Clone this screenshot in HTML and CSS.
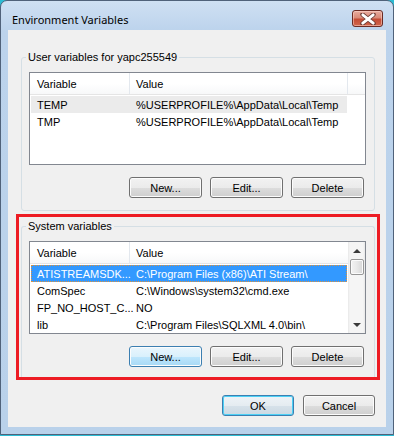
FILE: index.html
```html
<!DOCTYPE html>
<html lang="en">
<head>
    <meta charset="UTF-8">
    <meta name="viewport" content="width=device-width, initial-scale=1.0">
    <link rel="stylesheet" href="styles.css">
    <title>Environment Variables</title>
</head>
<body>
    <div class="window">
        <div class="titlebar">
            <span class="title">Environment Variables</span>
            <button class="close" aria-label="Close">
                <svg width="16" height="12" viewBox="0 0 16 12">
                    <path d="M2.5 1.5 L13.5 10.5 M13.5 1.5 L2.5 10.5" stroke="#6b3a33" stroke-width="4.4" stroke-linecap="round"/>
                    <path d="M2.8 1.8 L13.2 10.2 M13.2 1.8 L2.8 10.2" stroke="#ffffff" stroke-width="2.8" stroke-linecap="round"/>
                </svg>
            </button>
        </div>

        <div class="client">
            <!-- user variables -->
            <fieldset class="group first">
                <legend>User variables for yapc255549</legend>
                <div class="list">
                    <div class="main">
                        <div class="header">
                            <span class="hcol1">Variable</span>
                            <span class="hcol2 divided">Value</span>
                            <span class="hcol3"></span>
                        </div>
                        <div class="row light">
                            <span class="cell1">TEMP</span>
                            <span class="cell2">%USERPROFILE%\AppData\Local\Temp</span>
                        </div>
                        <div class="row">
                            <span class="cell1">TMP</span>
                            <span class="cell2">%USERPROFILE%\AppData\Local\Temp</span>
                        </div>
                    </div>
                </div>
                <div class="buttons">
                    <button>New...</button>
                    <button>Edit...</button>
                    <button>Delete</button>
                </div>
            </fieldset>

            <!-- system variables, marked in red -->
            <div class="highlight">
                <fieldset class="group second">
                    <legend>System variables</legend>
                    <div class="list">
                        <div class="main">
                            <div class="header">
                                <span class="hcol1">Variable</span>
                                <span class="hcol2">Value</span>
                            </div>
                            <div class="row selected">
                                <span class="cell1">ATISTREAMSDK...</span>
                                <span class="cell2">C:\Program Files (x86)\ATI Stream\</span>
                            </div>
                            <div class="row">
                                <span class="cell1">ComSpec</span>
                                <span class="cell2">C:\Windows\system32\cmd.exe</span>
                            </div>
                            <div class="row">
                                <span class="cell1">FP_NO_HOST_C...</span>
                                <span class="cell2">NO</span>
                            </div>
                            <div class="row">
                                <span class="cell1">lib</span>
                                <span class="cell2">C:\Program Files\SQLXML 4.0\bin\</span>
                            </div>
                        </div>
                        <div class="scrollbar">
                            <span class="arrow up"></span>
                            <span class="thumb"></span>
                            <span class="track"></span>
                            <span class="arrow down"></span>
                        </div>
                    </div>
                    <div class="buttons">
                        <button class="hot">New...</button>
                        <button>Edit...</button>
                        <button>Delete</button>
                    </div>
                </fieldset>
            </div>

            <div class="footer">
                <button class="default">OK</button>
                <button>Cancel</button>
            </div>
        </div>
    </div>
</body>
</html>
```

FILE: styles.css
```css
body {
    margin: 0;
    background: #2cbcd4;
    font-family: "Liberation Sans", Arial, sans-serif;
    font-size: 11px;
    color: #000;
}

.window {
    width: 394px;
    height: 435px;
    box-sizing: border-box;
    border: 1px solid #50627a;
    border-radius: 7px 7px 0 0;
    background: linear-gradient(to bottom, #cfe0f3, #bcd3ec 30px, #b9d1ea);
    padding: 0 7px 7px 7px;
    display: flex;
    flex-direction: column;
}

.titlebar {
    height: 29px;
    display: flex;
    justify-content: space-between;
    align-items: flex-start;
}

.title {
    margin: 11px 0 0 4px;
    line-height: 15px;
    font-family: "Noto Sans", "Open Sans", sans-serif;
    font-size: 11px;
}

.close {
    width: 31px;
    height: 17px;
    margin: 9px 3px 0 0;
    padding: 0;
    border: 1px solid #6a2b24;
    border-radius: 3px;
    background: linear-gradient(to bottom, #e8ac9f, #d98a78 45%, #c44c35 55%, #d1664c);
    box-shadow: inset 0 0 0 1px rgba(255, 220, 210, 0.5);
    display: flex;
    align-items: center;
    justify-content: center;
}

.client {
    flex: 1;
    background: #f0f0f0;
    padding: 20px 0 0 8px;
}

.group {
    width: 354px;
    box-sizing: border-box;
    margin: 0;
    border: 1px solid #d5dfe5;
    border-radius: 3px;
    padding: 0 8px 12px 7px;
}

.group.first {
    margin-left: 5px;
}

.group.second {
    margin: 2px 0 0 2px;
    padding-bottom: 10px;
    border-bottom: 0;
    border-radius: 3px 3px 0 0;
}

legend {
    line-height: 15px;
    padding: 0 2px;
    margin-left: -3px;
}

.list {
    height: 93px;
    box-sizing: border-box;
    margin-top: 7px;
    border: 1px solid #828790;
    background: #fff;
    display: flex;
    overflow: hidden;
}

.main {
    flex: 1;
}

.header {
    height: 22px;
    box-sizing: border-box;
    padding-top: 1px;
    border-bottom: 1px solid #e5e5e5;
    background: linear-gradient(to bottom, #ffffff 50%, #f7f8f9);
    display: flex;
    line-height: 20px;
    margin-bottom: 1px;
}

.header span {
    box-sizing: border-box;
    flex-shrink: 0;
    margin-top: -1px;
    padding-top: 1px;
}

.hcol1 {
    width: 100px;
    padding-left: 7px;
    border-right: 1px solid #e3e8ee;
}

.hcol2 {
    width: 218px;
    padding-left: 6px;
}

.hcol2.divided {
    border-right: 1px solid #e3e8ee;
}

.row {
    width: 316px;
    height: 17px;
    box-sizing: border-box;
    margin-left: 1px;
    padding-top: 2px;
    line-height: 15px;
    display: flex;
    white-space: nowrap;
}

.row.light {
    background: #ebebeb;
}

.row.selected {
    background: #3399ff;
    color: #fff;
    outline: 1px dotted #e0923a;
    outline-offset: -1px;
}

.cell1 {
    width: 99px;
    flex-shrink: 0;
    padding-left: 6px;
    box-sizing: border-box;
}

.cell2 {
    padding-left: 6px;
}

.scrollbar {
    width: 17px;
    display: flex;
    flex-direction: column;
    align-items: center;
    background: linear-gradient(to right, #e8e8e8, #f5f5f5 2px, #f5f5f5 15px, #e8e8e8);
}

.arrow {
    height: 17px;
    width: 17px;
    display: flex;
    align-items: center;
    justify-content: center;
}

.arrow::before {
    content: "";
    width: 0;
    height: 0;
    border-left: 4px solid transparent;
    border-right: 4px solid transparent;
}

.arrow.up::before {
    border-bottom: 4px solid #3a3a3a;
}

.arrow.down::before {
    border-top: 4px solid #3a3a3a;
}

.thumb {
    width: 14px;
    height: 16px;
    box-sizing: border-box;
    border: 1px solid #979797;
    border-radius: 2px;
    background: linear-gradient(to right, #f3f3f3, #e8e8e8 50%, #d6d6d6);
    box-shadow: inset 0 0 0 1px #fbfbfb;
}

.track {
    flex: 1;
}

.buttons {
    display: flex;
    justify-content: flex-end;
    gap: 8px;
    padding-right: 2px;
    margin-top: 12px;
}

button {
    font: inherit;
    color: #000;
    width: 73px;
    height: 21px;
    padding: 0;
    border: 1px solid #707070;
    border-radius: 3px;
    background: linear-gradient(to bottom, #f2f2f2, #ebebeb 50%, #dddddd 50%, #cfcfcf);
    box-shadow: inset 0 0 0 1px #fcfcfc;
}

button.hot {
    border-color: #3c7fb1;
    background: linear-gradient(to bottom, #eaf6fd, #d9f0fc 50%, #bee6fd 50%, #a7d9f5);
}

button.default {
    border-color: #3c7fb1;
    background: linear-gradient(to bottom, #eef3f7, #e5ecf1 50%, #d7e2ea 50%, #cbd9e3);
    box-shadow: inset 0 0 0 1px #4cd0f5;
}

.highlight {
    width: 364px;
    box-sizing: border-box;
    margin-top: 3px;
    border: 3px solid #ed1c24;
}

.footer {
    display: flex;
    justify-content: flex-end;
    gap: 9px;
    width: 359px;
    margin-top: 15px;
}

.footer button {
    width: 72px;
}
```
